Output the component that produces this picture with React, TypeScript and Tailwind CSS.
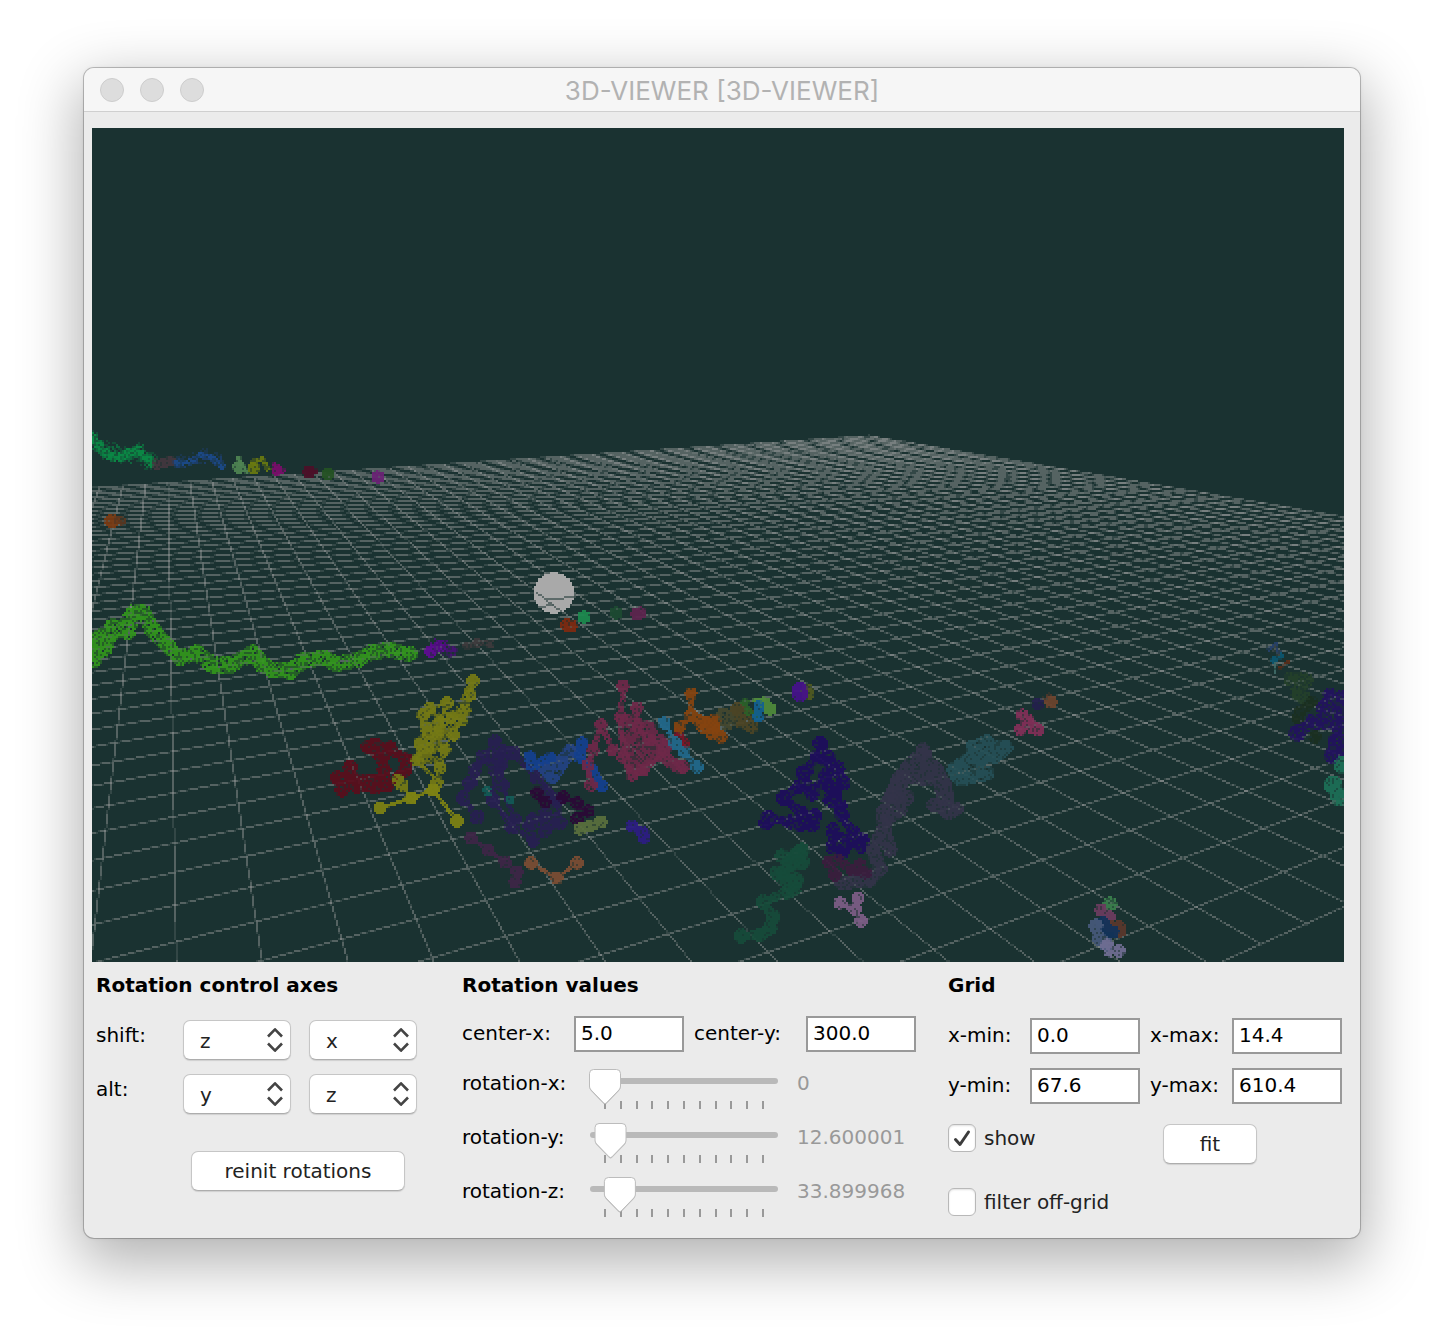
import { useState } from "react";
import type { ReactNode } from "react";

/* ------------------------------------------------------------------ */
/* Scene rasteriser: the view is drawn in cells of 2 x 2 screen pixels */
/* ------------------------------------------------------------------ */

const SCENE_W = 626;
const SCENE_H = 417;
const ORIGIN_X = 92;
const ORIGIN_Y = 128;

const HORIZON_Y = 316;
const VANISH_X = 165;

type Point = [number, number];

/** Projects a node of the ground grid to window coordinates. */
function project(row: number, col: number): Point {
  const w = 0.001598 + 0.0000998 * row + 0.0000533 * col;
  return [VANISH_X + (0.0176 + 0.1329 * col) / w, HORIZON_Y + 1 / w];
}

function toCell([x, y]: Point): Point {
  return [(x - ORIGIN_X) / 2, (y - ORIGIN_Y) / 2];
}

function noise(x: number, y: number, seed: number): number {
  const v = Math.sin(x * 12.9898 + y * 78.233 + seed * 37.719) * 43758.5453;
  return v - Math.floor(v);
}

/** One-cell-wide line, returned as bright cells and dim cells. */
function linePaths(from: Point, to: Point): [string, string] {
  const [x0, y0] = toCell(from);
  const [x1, y1] = toCell(to);
  const bright: string[] = [];
  const dim: string[] = [];
  const steep = Math.abs(y1 - y0) > Math.abs(x1 - x0);
  const [a0, b0, a1, b1] = steep ? [y0, x0, y1, x1] : [x0, y0, x1, y1];
  const [s0, t0, s1, t1] = a0 < a1 ? [a0, b0, a1, b1] : [a1, b1, a0, b0];
  const limit = steep ? SCENE_H : SCENE_W;
  const slope = (t1 - t0) / (s1 - s0);
  for (let s = Math.max(0, Math.round(s0)); s <= Math.min(limit - 1, s1); s++) {
    const t = t0 + slope * (s + 0.5 - s0);
    const cell = Math.floor(t);
    const off = Math.abs(t - cell - 0.5);
    const x = steep ? cell : s;
    const y = steep ? s : cell;
    if (x < 0 || y < 0 || x >= SCENE_W || y >= SCENE_H) continue;
    (off < 0.34 ? bright : dim).push(`M${x} ${y}h1v1h-1z`);
  }
  return [bright.join(""), dim.join("")];
}

const gridLines: [string, string][] = [];
for (let row = -7; row <= 44; row++) gridLines.push(linePaths(project(row, -8), project(row, 44)));
for (let col = -8; col <= 44; col++) gridLines.push(linePaths(project(-7, col), project(44, col)));

interface Trace {
  color: string;
  width: number;
  radius: number;
  holes: number;
  paths: number[][];
}

/** Fills the cells covered by a trace's links and nodes. */
function tracePath(trace: Trace, holeRate: number, seed: number): string {
  const cells = new Set<number>();
  const put = (cx: number, cy: number, r: number, holes: number) => {
    for (let y = Math.floor(cy - r); y <= Math.ceil(cy + r); y++) {
      for (let x = Math.floor(cx - r); x <= Math.ceil(cx + r); x++) {
        if (x < 0 || y < 0 || x >= SCENE_W || y >= SCENE_H) continue;
        const d = Math.hypot(x + 0.5 - cx, y + 0.5 - cy);
        if (d > r) continue;
        const edge = d > r - 1.2 ? 1.5 : 1;
        if (noise(x, y, seed) < holes * edge) continue;
        cells.add(y * SCENE_W + x);
      }
    }
  };
  for (const flat of trace.paths) {
    const pts: Point[] = [];
    for (let i = 0; i < flat.length; i += 2) pts.push(toCell([flat[i], flat[i + 1]]));
    pts.forEach(([x, y], i) => {
      put(x, y, trace.radius / 2 + 0.3, holeRate * 0.7);
      const next = pts[i + 1];
      if (!next) return;
      const steps = Math.ceil(Math.hypot(next[0] - x, next[1] - y) * 2);
      for (let k = 0; k <= steps; k++) {
        const r = trace.width / 4 + (trace.width > 6 ? 0.5 : 0);
        put(x + ((next[0] - x) * k) / steps, y + ((next[1] - y) * k) / steps, r, holeRate);
      }
    });
  }
  const sorted = [...cells].sort((a, b) => a - b);
  let d = "";
  for (let i = 0; i < sorted.length; ) {
    let n = 1;
    while (sorted[i + n] === sorted[i] + n && (sorted[i] + n) % SCENE_W !== 0) n++;
    d += `M${sorted[i] % SCENE_W} ${Math.floor(sorted[i] / SCENE_W)}h${n}v1h-${n}z`;
    i += n;
  }
  return d;
}

const t = (color: string, width: number, radius: number, holes: number, ...paths: number[][]): Trace => ({
  color,
  width,
  radius,
  holes,
  paths,
});

const traces: Trace[] = [
  // far edge
  t("#0e6e40", 16, 9, 0.7, [92, 440, 104, 450, 114, 452, 126, 455, 138, 452, 148, 460]),
  t("#0a8a45", 7, 4, 0.25, [92, 437, 100, 446, 108, 455, 118, 458, 128, 453, 138, 450, 146, 457, 152, 463]),
  t("#43373f", 8, 5, 0.2, [157, 464, 163, 463, 170, 461]),
  t("#1c3f6e", 14, 7, 0.7, [180, 462, 195, 460, 205, 456, 216, 460]),
  t("#1b4a8a", 5, 3, 0.35, [177, 463, 190, 462, 200, 455, 212, 457, 222, 466]),
  t("#4f8453", 5, 6, 0.08, [239, 467]),
  t("#4f8453", 3, 2, 0.3, [239, 458, 240, 464], [246, 470, 247, 472]),
  t("#6a7a10", 4, 6, 0.15, [254, 468]),
  t("#6a7a10", 5, 3, 0.3, [254, 462, 262, 459, 268, 469]),
  t("#7a0e6a", 6, 5, 0.1, [277, 470]),
  t("#7a0e6a", 4, 2, 0.4, [275, 464, 277, 474, 284, 471]),
  t("#4b1028", 5, 6, 0, [309, 472]),
  t("#4b1028", 5, 3, 0.1, [309, 472, 315, 471]),
  t("#245223", 5, 6, 0, [328, 474]),
  t("#6b2275", 5, 6, 0, [378, 477]),
  t("#7a3a12", 5, 7, 0.03, [112, 521]),
  t("#5a3720", 5, 4, 0.2, [118, 520, 122, 521]),
  // long green trace
  t(
    "#32961c", 14, 8, 0.36,
    [93, 653, 100, 637, 103, 650, 113, 627, 122, 630, 135, 612, 143, 613, 153, 630, 162, 640, 172, 650, 180, 658, 197, 653, 213, 665, 230, 665, 253, 653, 263, 665, 273, 670, 290, 671, 303, 661, 323, 658, 337, 664, 357, 660, 373, 652, 390, 650, 410, 654],
    [92, 648, 94, 660],
    [128, 632, 132, 616],
    [98, 640, 110, 635],
  ),
  t("#5e0a94", 7, 6, 0.12, [431, 651, 440, 646]),
  t("#4a1078", 12, 7, 0.6, [438, 645, 445, 648, 450, 650]),
  t("#3e3a3c", 6, 4, 0.35, [467, 646, 477, 643, 490, 644]),
  // near the sphere
  t("#7f2a10", 7, 6, 0.1, [567, 625, 571, 626]),
  t("#1d8a4f", 5, 6, 0, [584, 617]),
  t("#1c4a31", 5, 6, 0, [616, 613]),
  t("#5d244e", 6, 6, 0.1, [637, 614, 640, 613]),
  // centre left
  t(
    "#5a0e1c", 8, 7, 0.14,
    [337, 778, 342, 790, 350, 767, 358, 787, 375, 787, 387, 785, 405, 770, 406, 760, 390, 749, 368, 747],
    [368, 747, 382, 758, 384, 770, 380, 780, 347, 780],
    [375, 745, 390, 748],
  ),
  t(
    "#6b7016", 6, 3, 0.3,
    [428, 712, 450, 718, 430, 725, 455, 725, 426, 735, 448, 735, 420, 750, 444, 745, 416, 760, 436, 760],
    [468, 690, 456, 715, 440, 740, 426, 758],
  ),
  t(
    "#757a14", 4, 6, 0.12,
    [473, 681, 470, 695, 465, 710, 462, 720, 453, 735, 445, 750, 440, 768, 437, 782, 433, 790],
    [411, 798, 402, 785, 398, 780],
    [423, 715, 430, 708, 447, 703],
    [420, 743, 426, 727, 423, 715],
    [452, 717, 437, 733, 420, 743, 417, 760, 437, 782],
    [447, 703, 440, 722, 428, 748, 417, 760],
  ),
  t("#7d8213", 4, 6, 0, [433, 790, 457, 821], [433, 790, 411, 798, 380, 808]),
  t("#261f4d", 10, 3, 0.4, [486, 760, 505, 755, 498, 770], [545, 788, 556, 805]),
  t(
    "#271f52", 6, 7, 0.12,
    [495, 742, 483, 757, 475, 770, 470, 783, 463, 798, 477, 817],
    [495, 742, 495, 770, 493, 800, 512, 827, 533, 840, 560, 823, 557, 800, 537, 777, 513, 753, 495, 742],
    [500, 750, 502, 785, 515, 820],
    [533, 820, 557, 820, 545, 830],
    [530, 825, 545, 815],
    [483, 757, 500, 765, 513, 753],
  ),
  t("#3d2547", 4, 6, 0.05, [471, 838, 488, 850, 505, 862, 517, 872, 515, 882]),
  t("#7c4d33", 4, 6, 0.05, [531, 863, 557, 878, 577, 863]),
  t("#234283", 12, 6, 0.12, [544, 767, 552, 778, 560, 765, 570, 750]),
  t("#15408f", 7, 6, 0.05, [530, 757, 532, 765, 550, 758], [582, 743, 580, 757, 592, 770, 602, 786]),
  t("#125a55", 5, 4, 0.1, [510, 800], [487, 790, 488, 792]),
  t("#2a0936", 6, 6, 0.12, [537, 793, 545, 802], [563, 797, 577, 803, 588, 811, 577, 819]),
  t("#5a6f3d", 9, 6, 0.1, [580, 829, 590, 826, 601, 822]),
  t("#2c1d84", 7, 6, 0.1, [632, 826, 643, 833, 644, 838]),
  // centre
  t(
    "#6a2847", 11, 5, 0.22,
    [622, 720, 650, 728, 625, 738, 660, 740, 626, 752, 665, 750, 630, 765],
    [630, 720, 645, 750, 640, 770],
    [650, 730, 660, 755, 680, 768],
  ),
  t(
    "#6e2849", 6, 6, 0.12,
    [623, 686, 621, 717, 623, 757, 632, 775, 643, 770, 663, 753, 683, 767],
    [601, 725, 593, 750, 588, 765, 591, 785],
    [601, 725, 613, 750, 623, 757],
    [637, 708, 638, 727, 650, 740, 665, 745],
  ),
  t("#7d1427", 7, 4, 0.2, [678, 732, 685, 743]),
  t("#22698c", 5, 6, 0.08, [664, 723, 675, 743, 684, 752, 697, 767]),
  t("#85430f", 12, 5, 0.2, [702, 722, 714, 728]),
  t(
    "#85430f", 6, 6, 0.1,
    [691, 694, 691, 715, 680, 727],
    [691, 715, 703, 727, 712, 734, 721, 737],
    [698, 720, 715, 720, 715, 732],
  ),
  t("#45482f", 10, 6, 0.15, [723, 714, 727, 724, 733, 715]),
  t("#4c4424", 9, 6, 0.15, [737, 709, 740, 722, 752, 727], [740, 710, 748, 714]),
  t("#2a6128", 5, 4, 0.2, [745, 702, 748, 711, 756, 714]),
  t("#4f8a3b", 5, 6, 0, [764, 703, 770, 709]),
  t("#4f8a3b", 3, 2, 0, [755, 700, 764, 700]),
  t("#126091", 7, 5, 0.05, [759, 705, 758, 717]),
  t("#505a20", 5, 6, 0.1, [807, 690, 808, 694]),
  t("#46118a", 8, 8, 0.03, [800, 690, 800, 694]),
  // centre right
  t(
    "#1e0d5c", 7, 7, 0.12,
    [820, 743, 817, 757, 806, 771, 800, 786, 783, 798, 802, 813, 813, 825, 790, 822, 768, 817, 766, 823],
    [820, 743, 828, 757, 838, 768, 843, 783, 834, 795, 842, 815, 853, 833, 862, 840],
    [833, 830, 833, 847, 842, 852],
    [817, 757, 836, 770],
    [803, 773, 812, 794, 826, 775],
    [830, 787, 830, 800, 840, 806],
    [833, 832, 850, 842, 862, 847],
    [800, 825, 815, 816],
  ),
  t("#164b3a", 16, 5, 0.18, [800, 853, 790, 866, 784, 876, 793, 888]),
  t(
    "#164b3a", 7, 7, 0.08,
    [802, 850, 782, 856, 803, 862, 777, 873, 797, 880, 787, 892, 763, 902, 773, 917, 770, 928, 760, 935, 741, 936],
  ),
  t("#333349", 12, 7, 0.14, [900, 777, 890, 798, 883, 813, 885, 833, 890, 850], [883, 830, 873, 850, 880, 869, 870, 880, 842, 883]),
  t(
    "#333349", 16, 8, 0.16,
    [923, 756, 910, 768, 900, 780, 895, 795],
    [923, 762, 935, 770, 943, 785, 945, 797],
    [905, 775, 938, 778],
  ),
  t("#333349", 12, 7, 0.14, [934, 805, 956, 809, 948, 813], [900, 810, 888, 818], [907, 797, 907, 798], [923, 750, 924, 752]),
  t("#3a1d3d", 7, 6, 0.15, [829, 862, 835, 875], [838, 860, 852, 870, 866, 873, 860, 865]),
  t(
    "#265056", 13, 7, 0.17,
    [987, 742, 975, 748, 1006, 747, 995, 756, 968, 760, 954, 770, 960, 779, 977, 775, 987, 773],
    [973, 747, 980, 762],
  ),
  t("#822f58", 7, 6, 0.2, [1022, 715, 1027, 724, 1020, 730, 1038, 730], [1028, 720, 1036, 728]),
  t("#231f4c", 5, 6, 0.1, [1038, 704]),
  t("#6c432e", 5, 6, 0.02, [1051, 702]),
  t("#4c382c", 3, 2, 0.4, [1044, 698, 1049, 695]),
  t("#7d5d86", 6, 6, 0.05, [840, 903, 855, 909, 858, 898, 855, 909, 861, 921]),
  // right edge
  t("#3a4444", 6, 3, 0.5, [1274, 648, 1279, 654]),
  t("#26406a", 3, 2, 0.3, [1269, 649, 1276, 645, 1279, 652]),
  t("#0b556e", 5, 3, 0.1, [1274, 660, 1281, 656]),
  t("#3f6a66", 2, 1, 0, [1275, 664, 1275, 672]),
  t("#5a2c18", 3, 2, 0.2, [1280, 668, 1288, 662]),
  t("#24402a", 12, 7, 0.35, [1291, 679, 1306, 680, 1297, 693, 1304, 698]),
  t("#1a2f20", 8, 6, 0.25, [1312, 702, 1300, 712, 1298, 718], [1315, 737]),
  t(
    "#22125e", 10, 8, 0.25,
    [1330, 696, 1342, 698, 1324, 708, 1340, 714, 1312, 722, 1297, 733],
    [1320, 722, 1340, 727, 1336, 740, 1332, 755, 1341, 748],
  ),
  t("#1d6f57", 8, 9, 0.12, [1343, 765], [1333, 785, 1340, 797]),
  t("#3a7f4c", 5, 7, 0.3, [1110, 904]),
  t("#6c3c60", 6, 6, 0.05, [1101, 910, 1109, 917]),
  t("#5b382c", 5, 6, 0, [1110, 926, 1119, 927, 1120, 931]),
  t("#12325a", 9, 6, 0, [1103, 923, 1107, 930, 1113, 932]),
  t("#47597a", 8, 7, 0.1, [1096, 926, 1099, 938, 1106, 944]),
  t("#6f6d93", 8, 6, 0.05, [1107, 945, 1110, 951, 1119, 951]),
];

const tracePaths = traces.map((trace, i) => ({
  color: trace.color,
  texture: tracePath(trace, trace.holes > 0 ? trace.holes * 1.1 + 0.1 : 0.05, i + 1),
  haze: tracePath(trace, trace.holes > 0.5 ? trace.holes : trace.holes * 0.4, i + 60),
}));
const sphere = tracePath(t("#a9a9a9", 2, 20, 0, [554, 593]), 0, 99);
const sphereMarks = [
  linePaths([546, 600], [574, 597]),
  linePaths([536, 592], [562, 612]),
  linePaths([538, 607], [552, 605]),
];

function Scene() {
  return (
    <svg
      viewBox={`0 0 ${SCENE_W} ${SCENE_H}`}
      className="block w-full bg-[#1a3231]"
      shapeRendering="crispEdges"
      role="img"
      aria-label="3D view"
    >
      {gridLines.map(([bright, dim], i) => (
        <g key={i} fill="#a8a8a8">
          <path d={bright} fillOpacity={0.42} />
          <path d={dim} fillOpacity={0.18} />
        </g>
      ))}
      {tracePaths.map((p, i) => (
        <g key={i} fill={p.color}>
          <path d={p.haze} fillOpacity={0.45} />
          <path d={p.texture} fillOpacity={0.88} />
        </g>
      ))}
      <path d={sphere} fill="#a9a9a9" />
      {sphereMarks.map(([bright, dim], i) => (
        <path key={i} d={bright + dim} fill="#4a5a59" fillOpacity={0.8} />
      ))}
    </svg>
  );
}

/* ------------------------------------------------------------------ */
/* Controls                                                            */
/* ------------------------------------------------------------------ */

function Heading({ children }: { children: ReactNode }) {
  return <h2 className="h-6 text-[20px] leading-6 font-bold">{children}</h2>;
}

function AxisSelect({ label, value }: { label: string; value: string }) {
  return (
    <div className="relative w-[108px]">
      <select
        aria-label={label}
        defaultValue={value}
        className="h-10 w-full appearance-none rounded-[7px] border border-[#c6c6c6] border-b-[#adadad] bg-white pt-px pl-4 text-[20px] leading-6 text-[#222] shadow-[0_1px_1px_rgba(0,0,0,0.12)]"
      >
        <option>x</option>
        <option>y</option>
        <option>z</option>
      </select>
      <svg
        viewBox="0 0 16 26"
        className="pointer-events-none absolute top-[7px] right-2 h-[26px] w-4"
        fill="none"
        stroke="#444"
        strokeWidth="2.600"
        strokeLinejoin="round"
        aria-hidden="true"
      >
        <path d="M1 9.500 8 2.300l7 7.200M1 16.500l7 7.200 7-7.200" />
      </svg>
    </div>
  );
}

function AxisRow({ name, first, second }: { name: string; first: string; second: string }) {
  return (
    <div className="flex">
      <span className="w-[87px] pt-[3px] leading-6">{name}:</span>
      <div className="flex gap-[18px]">
        <AxisSelect label={`${name} first axis`} value={first} />
        <AxisSelect label={`${name} second axis`} value={second} />
      </div>
    </div>
  );
}

function PushButton({ children, className }: { children: ReactNode; className: string }) {
  return (
    <button
      type="button"
      className={`h-10 rounded-[7px] border border-[#c6c6c6] border-b-[#adadad] bg-white text-[20px] leading-6 text-[#222] shadow-[0_1px_1px_rgba(0,0,0,0.12)] ${className}`}
    >
      {children}
    </button>
  );
}

function NumberField({ id, label, value, labelClass }: { id: string; label: string; value: string; labelClass: string }) {
  return (
    <div className="flex">
      <label htmlFor={id} className={`pt-[5px] leading-6 whitespace-nowrap ${labelClass}`}>
        {label}:
      </label>
      <input
        id={id}
        defaultValue={value}
        className="h-9 w-[110px] border-2 border-[#999] bg-white px-[5px] pb-[2px] text-[20px] leading-6 outline-none"
      />
    </div>
  );
}

const TICKS = [15, 31, 47, 62, 78, 94, 110, 126, 141, 157, 173];

function RotationSlider({ axis, initial, text }: { axis: string; initial: number; text: string }) {
  const [value, setValue] = useState(initial);
  const id = `rotation-${axis}`;
  const x = (value / 360) * 158;
  return (
    <div className="flex h-[54px]">
      <label htmlFor={id} className="w-[127px] pt-[5px] leading-6">
        rotation-{axis}:
      </label>
      <div className="relative h-[46px] w-[190px]">
        <svg viewBox="0 0 190 46" className="block h-full w-full" aria-hidden="true">
          <rect x="1" y="12" width="188" height="6" rx="3" fill="#b9b9b9" />
          {TICKS.map((tick) => (
            <rect key={tick} x={tick} y="35" width="2" height="8" fill="#999" />
          ))}
          <g transform={`translate(${x} 3)`}>
            <path
              d="M4.500 1.500h23a4 4 0 0 1 4 4V18c0 1.500-.5 2.700-1.600 4L17.500 34.800c-1 1-2 1-3 0L2.100 22C1 20.700.5 19.500.5 18V5.500a4 4 0 0 1 4-4z"
              fill="#a0a0a0"
              opacity="0.6"
            />
            <path
              d="M4.500.5h23a4 4 0 0 1 4 4V17c0 1.500-.5 2.700-1.600 4L17.500 33.800c-1 1-2 1-3 0L2.100 21C1 19.700.5 18.500.5 17V4.500a4 4 0 0 1 4-4z"
              fill="#fff"
              stroke="#bcbcbc"
            />
          </g>
        </svg>
        <input
          id={id}
          type="range"
          min={0}
          max={360}
          step="any"
          value={value}
          onChange={(e) => setValue(Number(e.target.value))}
          className="absolute inset-0 h-9 w-full cursor-pointer opacity-0"
        />
      </div>
      <output htmlFor={id} className="ml-[18px] pt-[5px] leading-6 text-[#999]">
        {value === initial ? text : value.toFixed(6)}
      </output>
    </div>
  );
}

function CheckField({ id, label, initial }: { id: string; label: string; initial: boolean }) {
  const [on, setOn] = useState(initial);
  return (
    <div className="flex items-center gap-2">
      <div className="relative size-7">
        <input
          id={id}
          type="checkbox"
          checked={on}
          onChange={(e) => setOn(e.target.checked)}
          className="block size-7 appearance-none rounded-[6px] border border-[#b8b8b8] bg-white shadow-[inset_0_1px_2px_rgba(0,0,0,0.12)]"
        />
        {on && (
          <svg
            viewBox="0 0 28 28"
            className="pointer-events-none absolute inset-0 size-7"
            fill="none"
            stroke="#3c3c3c"
            strokeWidth="3"
            strokeLinecap="round"
            strokeLinejoin="round"
            aria-hidden="true"
          >
            <path d="m7.500 15.500 4.500 5L20.500 8" />
          </svg>
        )}
      </div>
      <label htmlFor={id} className="leading-6 text-[#222]">
        {label}
      </label>
    </div>
  );
}

function WindowButton({ label }: { label: string }) {
  return (
    <button type="button" aria-label={label} className="size-6 rounded-full border border-[#cdcdcd] bg-[#dddddd]" />
  );
}

export default function App() {
  return (
    <div className="min-h-screen bg-white px-[84px] pt-[68px] pb-[100px] font-['DejaVu_Sans',Verdana,sans-serif] text-[20px] text-black">
      <main className="overflow-hidden rounded-[10px] bg-[#ebebeb] shadow-[0_0_0_1px_rgba(0,0,0,0.22),0_0_4px_rgba(0,0,0,0.08),0_20px_60px_6px_rgba(0,0,0,0.3)]">
        <header className="grid h-11 grid-cols-[1fr_auto_1fr] items-center border-b border-[#cfcfcf] bg-[#f6f6f6] px-4">
          <div className="flex gap-4">
            <WindowButton label="Close" />
            <WindowButton label="Minimize" />
            <WindowButton label="Zoom" />
          </div>
          <h1 className="pt-[2px] font-['Inter',sans-serif] text-[26px] leading-8 text-[#b2b2b2]">3D-VIEWER [3D-VIEWER]</h1>
        </header>

        <div className="pt-4 pr-4 pb-[10px] pl-2">
          <Scene />

          <div className="grid grid-cols-[366fr_486fr_396fr] pt-[11px] pl-1">
            <section>
              <Heading>Rotation control axes</Heading>
              <div className="mt-[23px] flex flex-col gap-[14px]">
                <AxisRow name="shift" first="z" second="x" />
                <AxisRow name="alt" first="y" second="z" />
              </div>
              <PushButton className="mt-[37px] ml-[95px] w-[214px]">reinit rotations</PushButton>
            </section>

            <section>
              <Heading>Rotation values</Heading>
              <div className="mt-[19px] flex gap-[10px]">
                <NumberField id="center-x" label="center-x" value="5.0" labelClass="w-28" />
                <NumberField id="center-y" label="center-y" value="300.0" labelClass="w-28" />
              </div>
              <div className="mt-[14px]">
                <RotationSlider axis="x" initial={0} text="0" />
                <RotationSlider axis="y" initial={12.600001} text="12.600001" />
                <RotationSlider axis="z" initial={33.899968} text="33.899968" />
              </div>
            </section>

            <section>
              <Heading>Grid</Heading>
              <div className="mt-[21px] flex flex-col gap-[14px]">
                <div className="flex gap-[10px]">
                  <NumberField id="x-min" label="x-min" value="0.0" labelClass="w-[82px]" />
                  <NumberField id="x-max" label="x-max" value="14.4" labelClass="w-[82px]" />
                </div>
                <div className="flex gap-[10px]">
                  <NumberField id="y-min" label="y-min" value="67.6" labelClass="w-[82px]" />
                  <NumberField id="y-max" label="y-max" value="610.4" labelClass="w-[82px]" />
                </div>
              </div>
              <div className="mt-5 flex items-start">
                <div className="w-[215px]">
                  <CheckField id="show" label="show" initial={true} />
                </div>
                <PushButton className="w-[94px]">fit</PushButton>
              </div>
              <div className="mt-6">
                <CheckField id="filter-off-grid" label="filter off-grid" initial={false} />
              </div>
            </section>
          </div>
        </div>
      </main>
    </div>
  );
}
